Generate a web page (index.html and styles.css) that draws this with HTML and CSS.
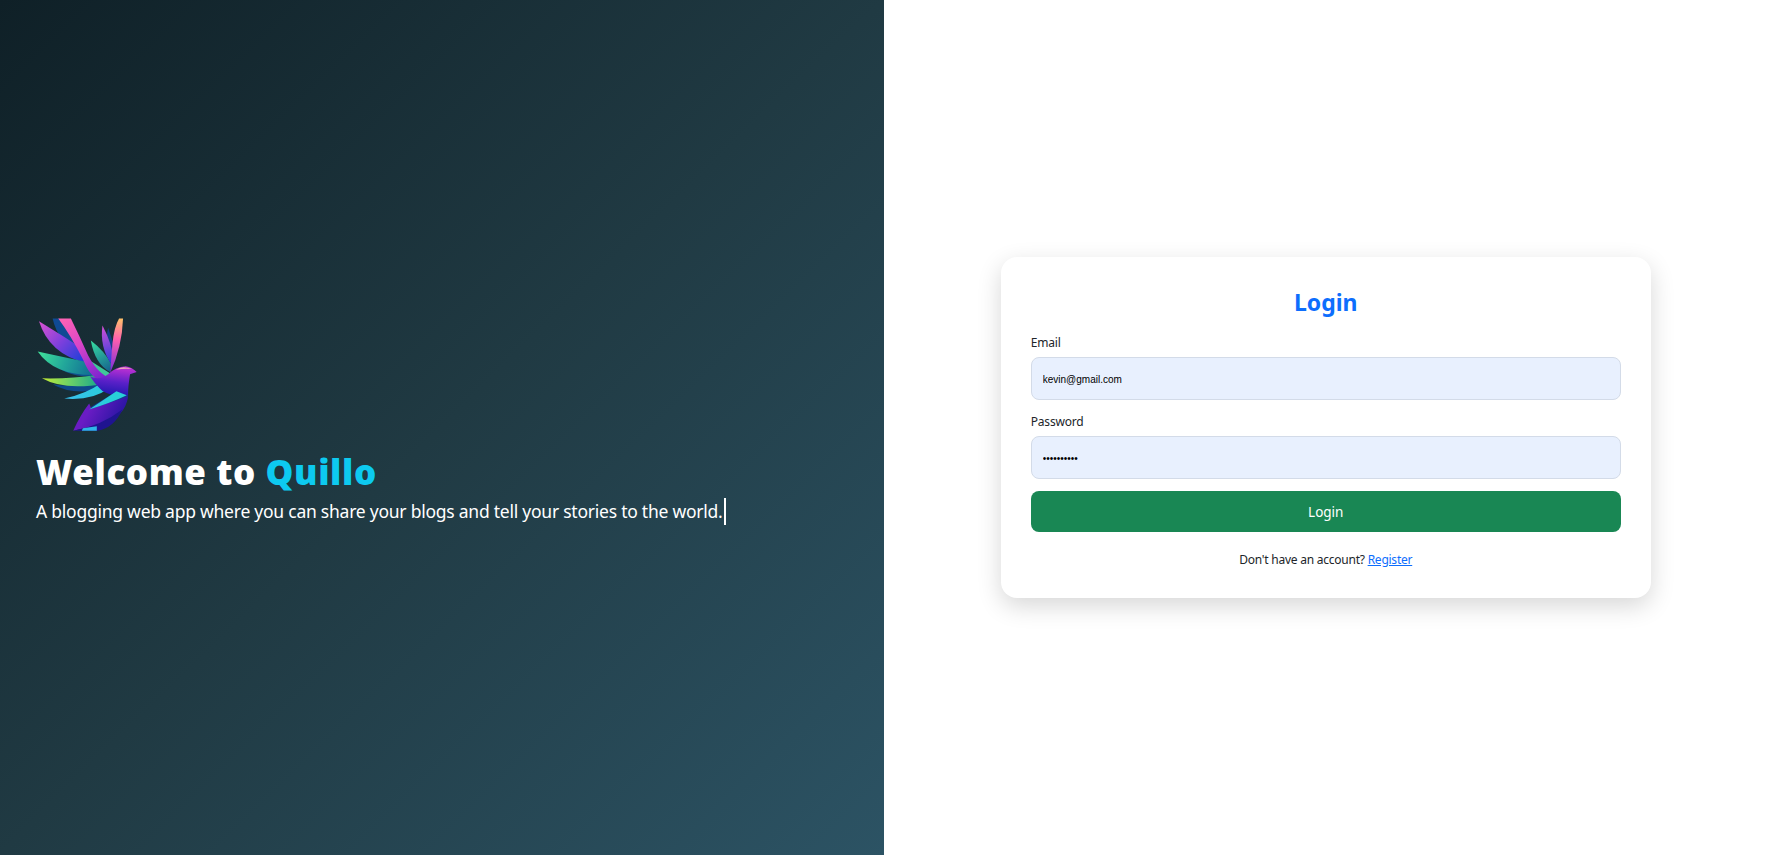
FILE: index.html
```html
<!DOCTYPE html>
<html lang="en">
<head>
  <meta charset="UTF-8" />
  <title>Login - Quillo</title>
  <link rel="stylesheet" href="styles.css">
</head>
<body>

<div class="page">
  <section class="hero">
    <svg class="logo" viewBox="45 50 310 345" aria-hidden="true">
      <defs>
        <linearGradient id="gPink" gradientUnits="userSpaceOnUse" x1="120" y1="55" x2="240" y2="235">
          <stop offset="0" stop-color="#ff63b4"/><stop offset="0.45" stop-color="#d845c8"/><stop offset="1" stop-color="#7a22d0"/>
        </linearGradient>
        <linearGradient id="gPurple" gradientUnits="userSpaceOnUse" x1="60" y1="65" x2="190" y2="175">
          <stop offset="0" stop-color="#d552d2"/><stop offset="0.5" stop-color="#7d3fdc"/><stop offset="1" stop-color="#1f3fd8"/>
        </linearGradient>
        <linearGradient id="gGreen" gradientUnits="userSpaceOnUse" x1="55" y1="155" x2="210" y2="215">
          <stop offset="0" stop-color="#3fe09a"/><stop offset="0.5" stop-color="#22a79a"/><stop offset="1" stop-color="#126f94"/>
        </linearGradient>
        <linearGradient id="gLime" gradientUnits="userSpaceOnUse" x1="65" y1="235" x2="240" y2="245">
          <stop offset="0" stop-color="#c2ec35"/><stop offset="0.45" stop-color="#6fd365"/><stop offset="1" stop-color="#14a58e"/>
        </linearGradient>
        <linearGradient id="gCyan" gradientUnits="userSpaceOnUse" x1="135" y1="295" x2="260" y2="255">
          <stop offset="0" stop-color="#39c0ee"/><stop offset="1" stop-color="#28cfd8"/>
        </linearGradient>
        <linearGradient id="gSmallGreen" gradientUnits="userSpaceOnUse" x1="215" y1="125" x2="268" y2="210">
          <stop offset="0" stop-color="#35d7a0"/><stop offset="1" stop-color="#15648f"/>
        </linearGradient>
        <linearGradient id="gRight" gradientUnits="userSpaceOnUse" x1="245" y1="80" x2="275" y2="185">
          <stop offset="0" stop-color="#d04fd6"/><stop offset="1" stop-color="#2a3fdc"/>
        </linearGradient>
        <linearGradient id="gTip" gradientUnits="userSpaceOnUse" x1="300" y1="55" x2="272" y2="210">
          <stop offset="0" stop-color="#ffc06a"/><stop offset="0.4" stop-color="#ff5fae"/><stop offset="1" stop-color="#7d2ed8"/>
        </linearGradient>
        <linearGradient id="gHead" gradientUnits="userSpaceOnUse" x1="290" y1="205" x2="280" y2="285">
          <stop offset="0" stop-color="#b32fd2"/><stop offset="0.5" stop-color="#5a20c8"/><stop offset="1" stop-color="#2018b0"/>
        </linearGradient>
        <linearGradient id="gBelly" gradientUnits="userSpaceOnUse" x1="210" y1="320" x2="300" y2="370">
          <stop offset="0" stop-color="#6a1cc4"/><stop offset="1" stop-color="#2414a0"/>
        </linearGradient>
      </defs>
      <!-- dark shadow feathers -->
      <path fill="#0f4a94" d="M95 54 L115 54 Q150 110 192 160 L192 186 Q110 125 95 54Z"/>
      <path fill="#0f4f8c" d="M85 176 Q135 195 205 205 L228 228 Q130 235 85 176Z"/>
      <path fill="#0e4a8a" d="M95 252 Q160 262 250 245 L262 262 Q160 290 95 252Z"/>
      <path fill="#123f86" d="M262 82 Q250 130 280 190 L278 130Z"/>
      <!-- wings -->
      <path fill="url(#gPurple)" d="M54 62 Q120 102 190 148 L192 186 Q85 160 54 62Z"/>
      <path fill="url(#gGreen)" d="M50 153 Q130 170 202 186 L218 224 Q100 225 50 153Z"/>
      <path fill="url(#gLime)" d="M63 234 Q150 236 226 224 L252 250 Q130 272 63 234Z"/>
      <path fill="url(#gCyan)" d="M130 295 Q200 278 238 250 L264 264 Q215 302 130 295Z"/>
      <path fill="url(#gSmallGreen)" d="M210 120 Q252 152 272 192 L268 215 Q222 190 210 120Z"/>
      <path fill="url(#gRight)" d="M245 75 Q272 125 280 180 L272 192 Q236 140 245 75Z"/>
      <path fill="url(#gTip)" d="M307 54 L295 54 Q280 80 275 130 L268 218 Q304 140 307 54Z"/>
      <path fill="#3fc79a" d="M212 183 L270 220 L262 234 Q225 218 212 183Z"/>
      <!-- long pink feather into the body -->
      <path fill="url(#gPink)" d="M112 54 L150 54 Q175 105 202 165 Q232 222 272 235 L262 250 Q212 242 188 180 Q150 105 112 54Z"/>
      <!-- body -->
      <path fill="#123a90" d="M190 332 L285 275 L322 285 L318 305 L215 340Z"/>
      <path fill="url(#gBelly)" d="M322 288 Q315 350 240 372 L157 392 Q178 345 205 310 Q215 330 205 328 L318 290Z"/>
      <path fill="#1f1490" d="M157 392 Q240 378 305 328 Q280 385 228 392Z"/>
      <path fill="#2fb6e8" d="M183 392 L186 384 L228 378 L228 392Z"/>
      <path fill="url(#gHead)" d="M262 222 Q285 200 315 198 Q335 202 348 215 L328 222 Q322 260 322 285 Q280 292 245 272 Q225 255 208 228 Q235 242 262 222Z"/>
      <path fill="#eeaab8" d="M285 208 Q305 194 334 206 Q310 204 285 208Z"/>
      <path fill="url(#gCyan)" d="M205 328 Q250 298 287 273 L318 285 Q270 308 205 328Z"/>
    </svg>
    <h1 class="hero-title">Welcome to <span class="brand">Quillo</span></h1>
    <p class="hero-text">A blogging web app where you can share your blogs and tell your stories to the world.<span class="caret"></span></p>
  </section>

  <main class="side">
    <form class="card">
      <h2 class="card-title">Login</h2>

      <label class="field-label" for="email">Email</label>
      <input class="field" type="email" id="email" value="kevin@gmail.com" />

      <label class="field-label" for="password">Password</label>
      <input class="field" type="password" id="password" value="kevin12345" />

      <button class="submit" type="button">Login</button>

      <p class="switch">Don't have an account? <a href="#">Register</a></p>
    </form>
  </main>
</div>

</body>
</html>
```

FILE: styles.css
```css
* {
  box-sizing: border-box;
}
body {
  margin: 0;
  font-family: "Noto Sans", "Open Sans", Arial, sans-serif;
  color: #212529;
  background-color: #fff;
}
.page {
  display: flex;
  height: 855px;
  overflow: hidden;
}

.hero {
  width: 50%;
  display: flex;
  flex-direction: column;
  justify-content: center;
  align-items: flex-start;
  padding: 0 36px 7px;
  color: #fff;
  background: linear-gradient(to bottom right, #0f2027, #203a43, #2c5364);
}
.logo {
  width: 103px;
  height: 115px;
  margin-top: -6px;
  margin-bottom: 18px;
}
.hero-title {
  margin: 0 0 4px;
  font-size: 35px;
  font-weight: 900;
  line-height: 44px;
  letter-spacing: 0.6px;
}
.brand {
  color: #0dcaf0;
}
.hero-text {
  margin: 0;
  font-size: 17.5px;
  line-height: 27px;
  letter-spacing: -0.24px;
  white-space: nowrap;
}
.caret {
  display: inline-block;
  width: 2px;
  height: 27px;
  margin-left: 1px;
  vertical-align: top;
  background-color: #fff;
}

.side {
  width: 50%;
  display: flex;
  justify-content: center;
  align-items: center;
  padding-left: 1px;
}
.card {
  width: 650px;
  height: 341px;
  padding: 30px;
  background-color: #fff;
  border-radius: 16px;
  box-shadow: 0 8px 24px rgba(0, 0, 0, 0.16);
}
.card-title {
  margin: 0 0 15px;
  text-align: center;
  font-size: 23px;
  font-weight: 700;
  line-height: 31px;
  color: #0d6efd;
}
.field-label {
  display: block;
  padding-top: 1px;
  margin-bottom: 5px;
  font-size: 12px;
  line-height: 18px;
  letter-spacing: -0.2px;
}
.field {
  display: block;
  width: 100%;
  height: 43px;
  margin-bottom: 12px;
  padding: 2px 11px 0;
  font-family: "Liberation Sans", Arial, sans-serif;
  font-size: 10px;
  color: #000;
  background-color: #e8f0fe;
  border: 1px solid #d3dbe8;
  border-radius: 8px;
}
.submit {
  display: block;
  width: 100%;
  height: 41px;
  margin-top: 12px;
  font-family: inherit;
  font-size: 13.5px;
  color: #fff;
  background-color: #198754;
  border: none;
  border-radius: 8px;
}
.switch {
  margin: 19px 0 0;
  text-align: center;
  font-size: 12px;
  line-height: 18px;
  letter-spacing: -0.24px;
}
.switch a {
  color: #0d6efd;
}
```
